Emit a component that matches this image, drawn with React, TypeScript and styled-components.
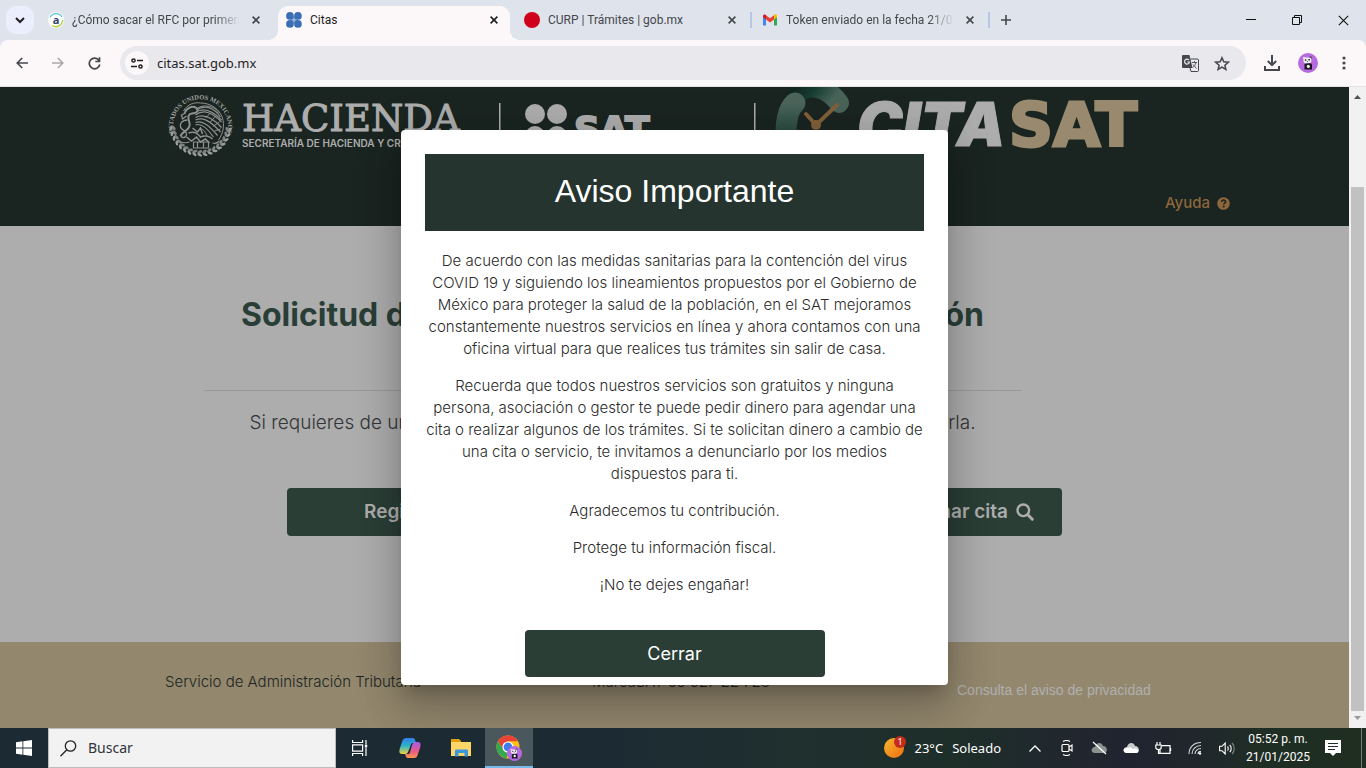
import React from "react";
import styled, { createGlobalStyle } from "styled-components";

const ui = '"Noto Sans", "Open Sans", sans-serif';
const uiSmall = 'Roboto, "Noto Sans", sans-serif';
const brand = 'Inter, "Open Sans", sans-serif';

const GlobalStyle = createGlobalStyle`
  *, *::before, *::after { box-sizing: border-box; }
  html, body, #root { height: 100%; }
  body { margin: 0; overflow: hidden; font-family: ${brand}; }
  button { border: 0; padding: 0; background: none; font: inherit; color: inherit; cursor: pointer; }
  input { border: 0; outline: 0; padding: 0; background: none; font: inherit; color: inherit; min-width: 0; }
  svg { display: block; flex: none; }
`;

const Desktop = styled.div`
  display: flex;
  flex-direction: column;
  height: 100vh;
  background: #dfe3ec;
`;

/* ---------- browser chrome ---------- */

const TabStrip = styled.div`
  display: flex;
  align-items: center;
  height: 40px;
  flex: none;
  padding-left: 6px;
  background: #dfe3ec;
  font: 12px/16px ${uiSmall};
  color: #45474d;
`;

const TabSearch = styled.button`
  display: grid;
  place-items: center;
  width: 28px;
  height: 28px;
  margin-right: 6px;
  border-radius: 10px;
  background: #ebeefd;
`;

const Tab = styled.div<{ $active?: boolean; $divided?: boolean }>`
  position: relative;
  display: flex;
  align-items: center;
  align-self: flex-end;
  gap: 8px;
  width: 232px;
  height: 34px;
  margin-right: 6px;
  padding: 0 8px 6px;
  border-radius: 10px 10px 0 0;
  color: ${(p) => (p.$active ? "#1f1f1f" : "#45474d")};
  background: ${(p) => (p.$active ? "#fcf8f9" : "transparent")};
  &::before, &::after {
    content: "";
    display: ${(p) => (p.$active ? "block" : "none")};
    position: absolute;
    bottom: 0;
    width: 10px;
    height: 10px;
  }
  &::before {
    right: 100%;
    background: radial-gradient(circle at 0 0, transparent 10px, #fcf8f9 10px);
  }
  &::after {
    display: ${(p) => (p.$active || p.$divided ? "block" : "none")};
    left: 100%;
    ${(p) =>
      p.$divided
        ? "width: 2px; height: 16px; bottom: 12px; margin-left: 2px; background: #b5c7e3;"
        : "background: radial-gradient(circle at 100% 0, transparent 10px, #fcf8f9 10px);"}
  }
`;

const TabTitle = styled.span<{ $fade?: boolean }>`
  flex: 1;
  overflow: hidden;
  white-space: nowrap;
  mask-image: ${(p) => (p.$fade ? "linear-gradient(to right, #000 85%, transparent)" : "none")};
`;

const CloseTab = styled.button`
  display: grid;
  place-items: center;
  width: 16px;
  height: 16px;
`;

const NewTab = styled.button`
  display: grid;
  place-items: center;
  width: 28px;
  height: 28px;
`;

const WindowButtons = styled.div`
  display: flex;
  align-self: stretch;
  margin-left: auto;
`;

const WindowButton = styled.button`
  display: grid;
  place-items: center;
  width: 46px;
  color: #111;
`;

const Toolbar = styled.div`
  display: flex;
  align-items: center;
  height: 47px;
  flex: none;
  padding: 0 4px;
  border-bottom: 1px solid #e6e1e4;
  border-radius: 8px 8px 0 0;
  background: #fcf8f9;
  color: #45474d;
`;

const ToolButton = styled.button<{ $faded?: boolean }>`
  display: grid;
  place-items: center;
  width: 36px;
  height: 34px;
  color: ${(p) => (p.$faded ? "#a9a8ab" : "#45474d")};
`;

const AddressBar = styled.form`
  display: flex;
  flex: 1;
  align-items: center;
  height: 34px;
  margin: 0 8px;
  padding: 0 8px 0 5px;
  border-radius: 17px;
  background: #e9e8ed;
  color: #1f1f1f;
  font: 13px/18px ${ui};
`;

const SiteInfo = styled.button`
  display: grid;
  place-items: center;
  width: 24px;
  height: 24px;
  margin-right: 8px;
  border-radius: 50%;
  background: #fcf8f9;
`;

const AddressInput = styled.input`
  flex: 1;
`;

const BarButton = styled.button`
  display: grid;
  place-items: center;
  width: 32px;
  height: 32px;
  color: #45474d;
`;

/* ---------- page ---------- */

const Window = styled.div`
  display: flex;
  flex: 1;
  min-height: 0;
`;

const Page = styled.div`
  position: relative;
  display: flex;
  flex: 1;
  flex-direction: column;
  min-width: 0;
  overflow: hidden;
  background: #adadad;
`;

const ScrollBar = styled.div`
  display: flex;
  flex-direction: column;
  align-items: center;
  width: 17px;
  padding: 5px 0;
  background: #f1f1f1;
`;

const ScrollTrack = styled.div`
  flex: 1;
  width: 13px;
  padding: 85px 0 2px;
`;

const ScrollThumb = styled.div`
  height: 100%;
  background: #c1c1c1;
`;

const PageHeader = styled.header`
  display: flex;
  flex-direction: column;
  height: 139px;
  flex: none;
  background: #1a2420;
`;

const Brands = styled.div`
  padding-left: 166px;
  height: 76px;
`;

const HelpLink = styled.a`
  display: flex;
  align-items: center;
  align-self: flex-end;
  gap: 7px;
  margin: 29px 119px 0 0;
  color: #8c673d;
  font: 500 15px/22px ${brand};
  text-decoration: none;
`;

const Main = styled.main`
  display: flex;
  flex: 1;
  flex-direction: column;
  align-items: center;
`;

const Intro = styled.section`
  display: flex;
  flex-direction: column;
  align-items: center;
  width: 100%;
  max-width: 817px;
  margin: 69px 124px 0 0;
  white-space: nowrap;
`;

const Title = styled.h1`
  margin: 0;
  color: #293e36;
  font: 700 32px/40px ${brand};
`;

const Rule = styled.hr`
  width: 100%;
  margin: 55px 0 20px;
  border: 0;
  border-top: 1px solid #989898;
`;

const Lead = styled.p`
  margin: 0;
  color: #333638;
  font: 300 19px/24px ${brand};
`;

const Actions = styled.div`
  display: flex;
  gap: 32px;
  width: 775px;
  margin-top: 53px;
`;

const Action = styled.button`
  display: flex;
  flex: 1;
  align-items: center;
  gap: 8px;
  height: 48px;
  padding: 0 28px 0 77px;
  border-radius: 4px;
  background: #2a3e36;
  color: #adadad;
  font: 600 19px/24px ${brand};
  white-space: nowrap;
  &:last-child {
    justify-content: flex-end;
  }
`;

const PageFooter = styled.footer`
  display: grid;
  grid-template-columns: 427fr 365fr 392fr;
  height: 86px;
  flex: none;
  padding: 29px 0 0 165px;
  background: #93876d;
  color: #1b2622;
  font: 300 15px/22px ${brand};
`;

const PrivacyLink = styled.a`
  margin-top: 8px;
  color: #b0b0b0;
  font: 14px/22px "Liberation Sans", Arial, sans-serif;
  text-decoration: none;
`;

/* ---------- dialog ---------- */

const DialogLayer = styled.div`
  position: absolute;
  inset: 0;
  display: grid;
  place-items: center;
`;

const Dialog = styled.section`
  display: flex;
  flex-direction: column;
  align-items: center;
  width: 547px;
  max-width: 80%;
  padding: 24px 24px 8px;
  border-radius: 4px;
  background: #fff;
  box-shadow:
    0 11px 15px -7px rgba(0, 0, 0, 0.2),
    0 24px 38px 3px rgba(0, 0, 0, 0.14),
    0 9px 46px 8px rgba(0, 0, 0, 0.12);
`;

const DialogTitle = styled.h2`
  width: 100%;
  margin: 0 0 19px;
  padding: 19px 0 22px;
  background: #25342f;
  color: #fff;
  text-align: center;
  font: 32px/36px "Liberation Sans", Arial, sans-serif;
`;

const Notice = styled.p`
  margin: 0 0 15px;
  color: #2b2b2b;
  text-align: center;
  white-space: nowrap;
  font: 300 15px/22px ${brand};
`;

const CloseButton = styled.button`
  width: 300px;
  height: 47px;
  margin-top: 19px;
  border-radius: 4px;
  background: #2a3e36;
  color: #fff;
  font: 400 18px/24px ${brand};
`;

/* ---------- taskbar ---------- */

const Taskbar = styled.div`
  display: flex;
  height: 40px;
  flex: none;
  background: linear-gradient(to right, #1b2a33 0, #1c2b33 45%, #20302f 58%, #1e2e29 70%, #212430 82%, #20262c 87%, #1f2e24 93%, #1f2e20 100%);
  color: #fff;
  font: 14px/20px ${ui};
`;

const TaskButton = styled.button<{ $active?: boolean; $w?: number }>`
  display: grid;
  place-items: center;
  width: ${(p) => p.$w ?? 50}px;
  border-bottom: 2px solid ${(p) => (p.$active ? "#76b9ed" : "transparent")};
  border-top: 2px solid transparent;
  background: ${(p) => (p.$active ? "#4a575c" : "transparent")};
`;

const SearchBox = styled.label`
  display: flex;
  align-items: center;
  gap: 11px;
  width: 288px;
  padding-left: 11px;
  border: 1px solid #bdbdbd;
  background: #f2f2f2;
  color: #333;
`;

const SearchInput = styled.input`
  flex: 1;
  &::placeholder { color: #2f3238; opacity: 1; }
`;

const Tray = styled.div`
  display: flex;
  margin-left: auto;
  padding-right: 4px;
`;

const Weather = styled.button`
  display: flex;
  align-items: center;
  gap: 9px;
  margin-right: 18px;
  font: 13px/20px ${ui};
`;

const Clock = styled.time`
  display: flex;
  flex-direction: column;
  justify-content: center;
  width: 70px;
  text-align: center;
  white-space: nowrap;
  font: 12px/18px ${uiSmall};
`;

const ShowDesktop = styled.button`
  width: 1px;
  margin-left: 8px;
  background: #6f7a74;
`;

/* ---------- drawings ---------- */

const Cross = ({ size = 8, w = 2 }: { size?: number; w?: number }) => (
  <svg width={size} height={size} viewBox="0 0 8 8" stroke="currentColor" strokeWidth={w} fill="none">
    <path d="M.6.6l6.8 6.8M7.4.6L.6 7.4" />
  </svg>
);

const SatDots = () => (
  <svg width="16" height="16" viewBox="0 0 15 15" fill="#3b6fb5">
    <rect x="4" y="4" width="7" height="7" fill="#8fb1dc" />
    <circle cx="3.7" cy="3.7" r="3.6" />
    <circle cx="11.2" cy="3.7" r="3.6" />
    <circle cx="3.7" cy="11.2" r="3.6" />
    <circle cx="11.2" cy="11.2" r="3.6" />
  </svg>
);

const LetterIcon = () => (
  <svg width="16" height="16" viewBox="0 0 16 16">
    <circle cx="8" cy="8" r="8" fill="#fff" />
    <path d="M2 5.500A6.800 6.800 0 0 1 14 5" fill="none" stroke="#56c3de" strokeWidth="1.200" />
    <path d="M14.600 8A6.800 6.800 0 0 1 4 13.500" fill="none" stroke="#b5d334" strokeWidth="1.400" />
    <text x="8" y="11.500" textAnchor="middle" fontFamily="Open Sans" fontWeight="700" fontSize="11" fill="#2d3f6b">a</text>
  </svg>
);

const GmailIcon = () => (
  <svg width="16" height="16" viewBox="0 0 16 16">
    <path d="M1 4v8.500c0 .6.4 1 1 1h2V7z" fill="#4285f4" />
    <path d="M15 4v8.500c0 .6-.4 1-1 1h-2V7z" fill="#34a853" />
    <path d="M12 3.500V7.600l3-2.300V4c0-1.500-1.600-2.200-2.600-1.400z" fill="#fbbc04" />
    <path d="M4 3.200v4.400l4 3 4-3V3.200l-4 3z" fill="#ea4335" />
    <path d="M1 4v1.300l3 2.300V3.200l-.5-.5C2.500 2 1 2.700 1 4z" fill="#c5221f" />
  </svg>
);

const Panda = ({ size }: { size: number }) => (
  <svg width={size} height={size} viewBox="0 0 20 20">
    <circle cx="10" cy="10" r="10" fill="#b56ae0" />
    <path d="M6.500 11.500c1-2 7-2 7.500 0v5H6.500z" fill="#1c1620" />
    <ellipse cx="10.300" cy="13.400" rx="1.600" ry="1.700" fill="#eee" />
    <circle cx="6" cy="5" r="1.300" fill="#d9d3de" />
    <circle cx="12.600" cy="4.600" r="1.300" fill="#5a5060" />
    <rect x="5.400" y="4.500" width="8" height="5.800" rx="2.400" fill="#f1eef3" />
    <ellipse cx="7.600" cy="7" rx="1" ry=".7" fill="#2a2230" />
    <ellipse cx="11.200" cy="6.800" rx="1" ry=".7" fill="#2a2230" />
    <circle cx="9.500" cy="8.500" r=".5" fill="#2a2230" />
  </svg>
);

const leaves = Array.from({ length: 17 }, (_, i) => 8 + i * 10.25);

const Emblem = () => (
  <g transform="translate(34.500 38)" fill="none" stroke="#8f9291">
    <path id="motto" d="M-27 7A27.500 27.500 0 1 1 27 7" stroke="none" />
    <text fill="#a2a4a3" stroke="none" fontFamily="Liberation Serif" fontWeight="700" fontSize="6.500">
      <textPath href="#motto" startOffset="50%" textAnchor="middle">ESTADOS UNIDOS MEXICANOS</textPath>
    </text>
    {leaves.map((a) => (
      <g key={a} transform={`rotate(${a}) translate(28.500 0)`}>
        <ellipse rx="1.500" ry="2.700" cx="-1.700" transform="rotate(-28)" fill="#7f8381" stroke="none" />
        <ellipse rx="1.300" ry="2.500" cx="1.500" transform="rotate(28)" fill="#9c9e9d" stroke="none" />
      </g>
    ))}
    <path d="M-17-14c4-7 11-9 17-8 10 0 19 6 22 15 2 7 1 15-4 22" strokeWidth="1" />
    <path d="M-16-12c2-5 8-8 12-5 2 2 1 5-2 5-3 1-5 0-6 3-1 4 2 6 1 10-1 5-7 5-9 10" strokeWidth="2" />
    <path d="M-15-12l-4 2 1 4 4-3M-13-5c-5 0-8 3-7 7s6 3 6 7-5 5-6 1" strokeWidth="1.300" />
    <path d="M-4-15C4-21 14-17 20-8M-5-12.500C3-18 12-14 21-5M-5-10c8-6 16-3 26 7M-5-7.500c8-4 16-1 26 10M-5-5c7-3 14 0 25 12M-5-2.500c6-2 12 1 22 13M-5 0c5-2 11 2 18 12" strokeWidth="1.200" />
    <path d="M-3-17C4-21 14-19 19-12M0 4c3 0 5 3 7 8M10-12l-5 5M15-9l-5 6M19-3l-6 4M20 4l-6 2" strokeWidth="1" />
    <path d="M-12 8c5-2 9 0 12 4 4-2 9-1 12 2M-14 12l5 4 5-4 4 5 5-3 4 4M-8 3l5 4 3-4 2 6" strokeWidth="1.500" />
    <path d="M-7 17h15v6H-7zM-20 17c3 1 6 1 9 0M12 18c3 1 5 0 7-2M-3 17v6M3 17v6" strokeWidth="1.200" />
  </g>
);

const BrandArt = () => (
  <svg width="1010" height="76" viewBox="0 0 1010 76" role="img" aria-label="Hacienda, SAT, CitaSAT">
    <defs>
      <linearGradient id="leftLobe" x1="0" y1="0" x2="0" y2="1">
        <stop offset="0" stopColor="#4b655b" />
        <stop offset="1" stopColor="#153a2f" />
      </linearGradient>
      <linearGradient id="rightLobe" x1="0" y1="0" x2="1" y2="0.300">
        <stop offset="0" stopColor="#12271f" />
        <stop offset="0.450" stopColor="#173d32" />
        <stop offset="1" stopColor="#496359" />
      </linearGradient>
    </defs>
    <Emblem />
    <g fill="#adadad">
      <text x="76" y="44" fontFamily="DejaVu Serif" fontSize="37" stroke="#adadad" strokeWidth="1">HACIENDA</text>
      <text x="76" y="60" fontFamily="Inter" fontWeight="600" fontSize="10">SECRETARÍA DE HACIENDA Y CRÉDITO PÚBLICO</text>
      <rect x="333" y="16" width="1.500" height="46" />
      <rect x="588" y="16" width="1.500" height="46" />
      <circle cx="369" cy="27" r="10" />
      <circle cx="391" cy="27" r="10" />
      <circle cx="369" cy="49" r="10" />
      <circle cx="391" cy="49" r="10" />
      <text x="408" y="55" fontFamily="DejaVu Sans" fontWeight="700" fontSize="36" stroke="#adadad" strokeWidth="2">SAT</text>
    </g>
    <path d="M630 8C640-4 660-2 673 16" fill="none" stroke="url(#rightLobe)" strokeWidth="20" strokeLinecap="round" />
    <path d="M629 16C622 22 619 34 620 60" fill="none" stroke="url(#leftLobe)" strokeWidth="21" strokeLinecap="round" />
    <path d="M640 27l10 11 21-20" fill="none" stroke="#80603a" strokeWidth="4" strokeLinecap="round" />
    <circle cx="650" cy="38" r="5" fill="#80603a" />
    <text x="691" y="59" fontFamily="Inter" fontWeight="900" fontStyle="italic" fontSize="61" fill="#adadad" stroke="#adadad" strokeWidth="1">CITA</text>
    <text x="843" y="59" fontFamily="DejaVu Sans" fontWeight="700" fontSize="61" fill="#998a6f" stroke="#998a6f" strokeWidth="3">SAT</text>
  </svg>
);

const CopilotIcon = () => (
  <svg width="22" height="22" viewBox="0 0 22 22">
    <defs>
      <linearGradient id="copA" x1="0" y1="0" x2="0" y2="1">
        <stop offset="0" stopColor="#2f7fe8" />
        <stop offset="0.500" stopColor="#2fb4c8" />
        <stop offset="1" stopColor="#f0d23c" />
      </linearGradient>
      <linearGradient id="copB" x1="0" y1="0" x2="0" y2="1">
        <stop offset="0" stopColor="#a35bea" />
        <stop offset="0.600" stopColor="#ec5c80" />
        <stop offset="1" stopColor="#f79a4a" />
      </linearGradient>
    </defs>
    <path d="M7 1h7c2 0 2 2 3 5h-3c-2 0-2 1-3 4l-2 5c-1 2-2 2-4 2H3c-3 0-3-3-2-6l2-6c1-3 2-4 4-4z" fill="url(#copA)" />
    <path d="M15 21H9c-2 0-2-2-3-4h3c2 0 2-2 3-5l1-4c1-2 2-3 4-3h2c3 0 3 3 2 6l-2 6c-1 3-2 4-4 4z" fill="url(#copB)" />
  </svg>
);

const FolderIcon = () => (
  <svg width="22" height="18" viewBox="0 0 22 18">
    <path d="M1 0h8l2 2v4H1z" fill="#e0a010" />
    <path d="M1 3h20v14H1z" fill="#fcd667" />
    <path d="M5 17.500V12c0-1 .5-1.500 1.500-1.500h10c1 0 1.500.5 1.500 1.500v5.500h-3.500V14h-6v3.500z" fill="#3a96dd" />
  </svg>
);

const ChromeIcon = () => (
  <svg width="26" height="26" viewBox="0 0 26 26">
    <circle cx="12" cy="12" r="11.500" fill="#fbc116" />
    <path d="M2 6.200A11.500 11.500 0 0 1 22 6.200H12L7 15z" fill="#ea4335" />
    <path d="M2 6.200L7.500 15c1 2 3 2.500 5 2.300L10.500 23.400A11.500 11.500 0 0 1 2 6.200z" fill="#34a853" />
    <circle cx="12" cy="12" r="5.600" fill="#fff" />
    <circle cx="12" cy="12" r="4.400" fill="#3b7ded" />
    <svg x="11" y="11" width="15" height="15"><Panda size={15} /></svg>
  </svg>
);

const WeatherIcon = () => (
  <svg width="22" height="24" viewBox="0 0 22 24">
    <defs>
      <linearGradient id="sun" x1="0" y1="0" x2="1" y2="1">
        <stop offset="0" stopColor="#f6b92c" />
        <stop offset="1" stopColor="#ee6c13" />
      </linearGradient>
    </defs>
    <circle cx="10" cy="12" r="10" fill="url(#sun)" />
    <circle cx="16" cy="6" r="6" fill="#c42b1c" />
    <text x="16" y="9" textAnchor="middle" fill="#fff" fontFamily="Noto Sans" fontSize="9">1</text>
  </svg>
);

const cloud = "M4 12c-5 0-4-6 0-6 1-5 7-5 8-1 5 0 5 7 1 7z";

const tabs = [
  { title: "¿Cómo sacar el RFC por primera vez", icon: <LetterIcon />, fade: true },
  { title: "Citas", icon: <SatDots />, active: true },
  { title: "CURP | Trámites | gob.mx", icon: <svg width="16" height="16"><circle cx="8" cy="8" r="8" fill="#d0021b" /></svg>, divided: true },
  { title: "Token enviado en la fecha 21/01/2025", icon: <GmailIcon />, fade: true, divided: true },
];

export default function App() {
  return (
    <Desktop>
      <GlobalStyle />
      <TabStrip>
        <TabSearch aria-label="Buscar pestañas">
          <svg width="10" height="7" viewBox="0 0 10 7" fill="none" stroke="#1f1f1f" strokeWidth="2"><path d="M1 1l4 4 4-4" /></svg>
        </TabSearch>
        {tabs.map((t) => (
          <Tab key={t.title} $active={t.active} $divided={t.divided}>
            {t.icon}
            <TabTitle $fade={t.fade}>{t.title}</TabTitle>
            <CloseTab aria-label="Cerrar pestaña"><Cross w={1.6} /></CloseTab>
          </Tab>
        ))}
        <NewTab aria-label="Nueva pestaña">
          <svg width="10" height="10" viewBox="0 0 10 10" stroke="currentColor" strokeWidth="1.600"><path d="M5 0v10M0 5h10" /></svg>
        </NewTab>
        <WindowButtons>
          <WindowButton aria-label="Minimizar">
            <svg width="10" height="10" viewBox="0 0 10 10" stroke="currentColor"><path d="M0 4.500h10" /></svg>
          </WindowButton>
          <WindowButton aria-label="Restaurar">
            <svg width="10" height="10" viewBox="0 0 10 10" stroke="currentColor" fill="none"><path d="M.5 2.500h7v7h-7zM2.500 2.500v-2h7v7h-2" /></svg>
          </WindowButton>
          <WindowButton aria-label="Cerrar ventana"><Cross size={11} w={0.8} /></WindowButton>
        </WindowButtons>
      </TabStrip>

      <Toolbar>
        <ToolButton aria-label="Atrás">
          <svg width="12" height="12" viewBox="0 0 12 12" fill="none" stroke="currentColor" strokeWidth="1.600"><path d="M12 6H1.200M6.200 1L1.200 6l5 5" /></svg>
        </ToolButton>
        <ToolButton aria-label="Adelante" $faded>
          <svg width="12" height="12" viewBox="0 0 12 12" fill="none" stroke="currentColor" strokeWidth="1.600"><path d="M0 6h10.800M5.800 1l5 5-5 5" /></svg>
        </ToolButton>
        <ToolButton aria-label="Recargar">
          <svg width="13" height="13" viewBox="0 0 13 13" fill="none" stroke="currentColor" strokeWidth="1.700"><path d="M11 3.500A5.300 5.300 0 1 0 11.800 7.500M11.500.3v4.200H7.300" /></svg>
        </ToolButton>
        <AddressBar onSubmit={(e) => e.preventDefault()}>
          <SiteInfo type="button" aria-label="Información del sitio">
            <svg width="12" height="11" viewBox="0 0 12 11" fill="none" stroke="#1f1f1f" strokeWidth="1.500">
              <circle cx="2.500" cy="2.500" r="1.600" /><path d="M6 2.500h6M0 8.500h6" /><circle cx="9.500" cy="8.500" r="1.600" />
            </svg>
          </SiteInfo>
          <AddressInput aria-label="Dirección" defaultValue="citas.sat.gob.mx" />
          <BarButton type="button" aria-label="Traducir">
            <svg width="17" height="17" viewBox="0 0 17 17">
              <path d="M1 0h6.500l3 13H1a1 1 0 0 1-1-1V1a1 1 0 0 1 1-1z" fill="#45474d" />
              <path d="M8.500 4H15.500a1 1 0 0 1 1 1v10.500a1 1 0 0 1-1 1H9L8 13" fill="none" stroke="#45474d" />
              <path d="M10 7.500h5M12.500 6v1.500M14 7.500c-.5 2.500-2 4-3.500 5M11 9.500l3.500 4" fill="none" stroke="#55575d" strokeWidth="1" />
              <path d="M7 5A2.500 2.500 0 1 0 7.500 7H5.200" fill="none" stroke="#e9e8ed" strokeWidth="1.200" />
            </svg>
          </BarButton>
          <BarButton type="button" aria-label="Agregar a favoritos">
            <svg width="16" height="15" viewBox="0 0 16 15" fill="none" stroke="currentColor" strokeWidth="1.500"><path d="M8 1.700l1.800 4.100 4.500.4-3.400 3 1 4.300L8 11.200l-3.900 2.300 1-4.300-3.400-3 4.500-.4z" /></svg>
          </BarButton>
        </AddressBar>
        <ToolButton aria-label="Descargas">
          <svg width="16" height="16" viewBox="0 0 16 16" fill="none" stroke="currentColor" strokeWidth="2"><path d="M8 0v10M3.800 6L8 10.200 12.200 6M1 11v4h14v-4" /></svg>
        </ToolButton>
        <ToolButton aria-label="Perfil"><Panda size={20} /></ToolButton>
        <ToolButton aria-label="Menú">
          <svg width="4" height="14" viewBox="0 0 4 14" fill="currentColor"><circle cx="2" cy="2" r="1.600" /><circle cx="2" cy="7" r="1.600" /><circle cx="2" cy="12" r="1.600" /></svg>
        </ToolButton>
      </Toolbar>

      <Window>
        <Page>
          <PageHeader>
            <Brands><BrandArt /></Brands>
            <HelpLink href="#ayuda">
              Ayuda
              <svg width="13" height="13" viewBox="0 0 13 13">
                <circle cx="6.500" cy="6.500" r="6.300" fill="#8c673d" />
                <path d="M4.600 5c0-2.600 4-2.400 4-.2 0 1.400-1.900 1.400-1.900 2.700" fill="none" stroke="#1a2420" strokeWidth="1.500" />
                <circle cx="6.700" cy="9.600" r="1" fill="#1a2420" />
              </svg>
            </HelpLink>
          </PageHeader>
          <Main>
            <Intro>
              <Title>Solicitud de cita para trámites o una orientación</Title>
              <Rule />
              <Lead>Si requieres de una cita, regístrala; si ya la tienes, puedes consultarla o cancelarla.</Lead>
            </Intro>
            <Actions>
              <Action>Registrar cita</Action>
              <Action>
                Gestionar cita
                <svg width="18" height="18" viewBox="0 0 18 18" fill="none" stroke="currentColor"><circle cx="7.300" cy="7.300" r="5.800" strokeWidth="2.400" /><path d="M11.800 11.800l4.500 4.500" strokeWidth="3" strokeLinecap="round" /></svg>
              </Action>
            </Actions>
          </Main>
          <PageFooter>
            <span>Servicio de Administración Tributaria</span>
            <span>MarcaSAT 55 627 22 728</span>
            <PrivacyLink href="#privacidad">Consulta el aviso de privacidad</PrivacyLink>
          </PageFooter>

          <DialogLayer>
            <Dialog role="dialog" aria-modal="true" aria-labelledby="aviso">
              <DialogTitle id="aviso">Aviso Importante</DialogTitle>
              <Notice>
                De acuerdo con las medidas sanitarias para la contención del virus<br />
                COVID 19 y siguiendo los lineamientos propuestos por el Gobierno de<br />
                México para proteger la salud de la población, en el SAT mejoramos<br />
                constantemente nuestros servicios en línea y ahora contamos con una<br />
                oficina virtual para que realices tus trámites sin salir de casa.
              </Notice>
              <Notice>
                Recuerda que todos nuestros servicios son gratuitos y ninguna<br />
                persona, asociación o gestor te puede pedir dinero para agendar una<br />
                cita o realizar algunos de los trámites. Si te solicitan dinero a cambio de<br />
                una cita o servicio, te invitamos a denunciarlo por los medios<br />
                dispuestos para ti.
              </Notice>
              <Notice>Agradecemos tu contribución.</Notice>
              <Notice>Protege tu información fiscal.</Notice>
              <Notice>¡No te dejes engañar!</Notice>
              <CloseButton>Cerrar</CloseButton>
            </Dialog>
          </DialogLayer>
        </Page>
        <ScrollBar>
          <svg width="7" height="10" viewBox="0 0 7 10" fill="#505050"><path d="M3.500 3L7 7H0z" /></svg>
          <ScrollTrack><ScrollThumb /></ScrollTrack>
          <svg width="7" height="10" viewBox="0 0 7 10" fill="#9a9a9a"><path d="M3.500 7L7 3H0z" /></svg>
        </ScrollBar>
      </Window>

      <Taskbar>
        <TaskButton $w={48} aria-label="Inicio">
          <svg width="16" height="16" viewBox="0 0 16 16" fill="#fff"><path d="M0 2.200L6.500 1.300v6.300H0zM7.300 1.200L16 0v7.600H7.300zM0 8.400h6.500v6.300L0 13.800zM7.300 8.400H16V16l-8.700-1.200z" /></svg>
        </TaskButton>
        <SearchBox>
          <svg width="17" height="17" viewBox="0 0 17 17" fill="none" stroke="#222" strokeWidth="1.300"><circle cx="10.500" cy="6" r="5.200" /><path d="M6.800 9.800L.5 16.200" /></svg>
          <SearchInput aria-label="Buscar" placeholder="Buscar" />
        </SearchBox>
        <TaskButton $w={48} aria-label="Vista de tareas">
          <svg width="16" height="16" viewBox="0 0 16 16" fill="none" stroke="#fff" strokeWidth="1.200">
            <path d="M.6 0v2.500h10V0M.6 16v-2.500h10V16M.6 4.800h10v6.400H.6zM14 0v4M14 8v8" /><rect x="12.800" y="4.500" width="2.400" height="3" fill="#fff" stroke="none" />
          </svg>
        </TaskButton>
        <TaskButton $w={52} aria-label="Copilot"><CopilotIcon /></TaskButton>
        <TaskButton $w={49} aria-label="Explorador de archivos"><FolderIcon /></TaskButton>
        <TaskButton $w={48} $active aria-label="Google Chrome"><ChromeIcon /></TaskButton>
        <Tray>
          <Weather>
            <WeatherIcon />
            <span>23°C</span>
            <span>Soleado</span>
          </Weather>
          <TaskButton $w={32} aria-label="Mostrar iconos ocultos">
            <svg width="12" height="7" viewBox="0 0 12 7" fill="none" stroke="#fff" strokeWidth="1.300"><path d="M.5 6.500L6 1l5.500 5.500" /></svg>
          </TaskButton>
          <TaskButton $w={32} aria-label="Cámara">
            <svg width="14" height="16" viewBox="0 0 14 16" fill="none" stroke="#fff" strokeWidth="1.200"><rect x="2" y="4.500" width="7" height="7" rx="1" /><path d="M9 7l3-2v6L9 9M3 1.500c2-1.200 5-1.200 7 0M3 14.500c2 1.200 5 1.200 7 0" /></svg>
          </TaskButton>
          <TaskButton $w={32} aria-label="Sin conexión a la nube">
            <svg width="17" height="14" viewBox="0 0 17 14"><path d={cloud} fill="#8b9290" /><path d="M2 1l13 12" stroke="#fff" strokeWidth="1.200" /></svg>
          </TaskButton>
          <TaskButton $w={32} aria-label="OneDrive">
            <svg width="17" height="14" viewBox="0 0 17 14"><path d={cloud} fill="#c9cccb" /><path d="M4 12c-5 0-4-6 0-5 3-1 5 0 6 1 6-2 7 4 3 4z" fill="#fff" /></svg>
          </TaskButton>
          <TaskButton $w={32} aria-label="Batería">
            <svg width="17" height="13" viewBox="0 0 17 13" fill="none" stroke="#fff" strokeWidth="1.200"><path d="M7 3.600h8v7.800H5V8M15.600 6v3M2 0v3M5 0v3M.8 3h5.400v2.500c0 1.500-1.200 2-2.700 2S.8 7 .8 5.500zM3.500 7.500v3.900H5" /></svg>
          </TaskButton>
          <TaskButton $w={32} aria-label="Red">
            <svg width="14" height="14" viewBox="0 0 14 14" fill="none" stroke="#d5d8d8" strokeWidth="1.100"><path d="M1 13C1 6 6 1.500 13 1.500M4 13c0-5 4-8.500 9-8.500M7 13c0-3 2.500-5.500 6-5.500M10 13c0-1.500 1-2.600 3-2.600" /><circle cx="12" cy="12.500" r="1.200" fill="#fff" stroke="none" /></svg>
          </TaskButton>
          <TaskButton $w={32} aria-label="Volumen">
            <svg width="16" height="13" viewBox="0 0 16 13" fill="none" stroke="#fff" strokeWidth="1.100"><path d="M.6 4.300H3L6.200 1v11L3 8.700H.6zM8.500 4.500c1 1 1 3 0 4M10.700 2.800c2 2 2 5.400 0 7.400" /><path d="M13 1c3 3 3 8 0 11" stroke="#7d8784" /></svg>
          </TaskButton>
          <Clock dateTime="2025-01-21T17:52">
            <span>05:52 p. m.</span>
            <span>21/01/2025</span>
          </Clock>
          <TaskButton $w={40} aria-label="Notificaciones">
            <svg width="16" height="16" viewBox="0 0 16 16"><path d="M0 0h16v13h-5l-3 3-3-3H0z" fill="#fff" /><path d="M3 3.500h10M3 6.500h10M3 9.500h7" stroke="#1f2e22" strokeWidth="1.100" /></svg>
          </TaskButton>
          <ShowDesktop aria-label="Mostrar escritorio" />
        </Tray>
      </Taskbar>
    </Desktop>
  );
}
